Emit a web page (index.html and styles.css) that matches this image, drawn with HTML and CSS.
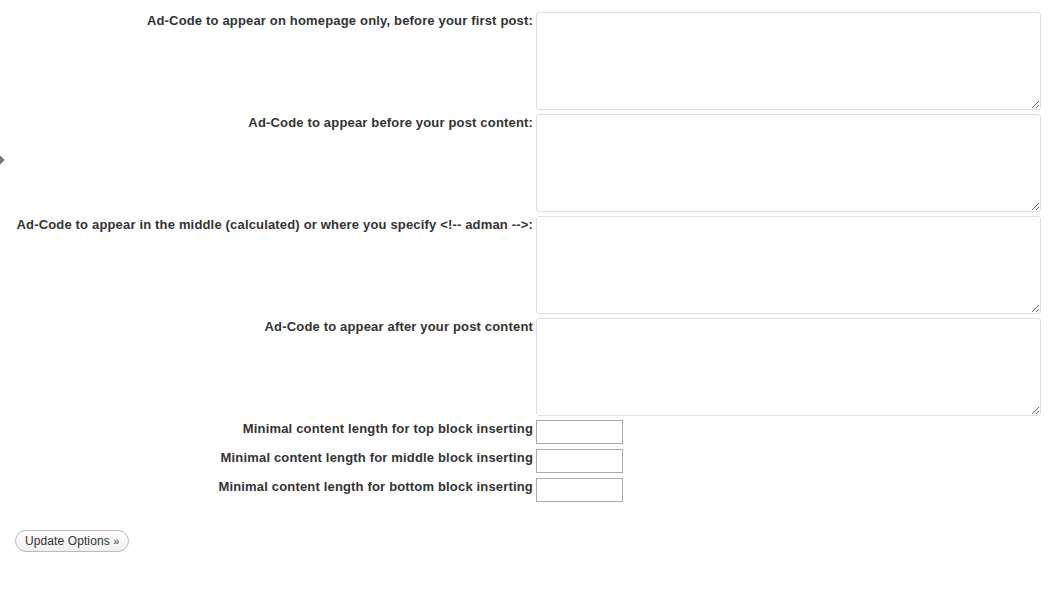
FILE: index.html
```html
<!DOCTYPE html>
<html>
<head>
	<meta charset="utf-8">
	<title>Adman Options</title>
<link rel="stylesheet" href="styles.css">
</head>
<body>
	<div class="menu-arrow"></div>

	<div class="wrap">
		<form class="options">
			<label for="top-code">Ad-Code to appear on homepage only, before your first post:</label>
			<textarea id="top-code"></textarea>

			<label for="before-code">Ad-Code to appear before your post content:</label>
			<textarea id="before-code"></textarea>

			<label for="middle-code">Ad-Code to appear in the middle (calculated) or where you specify &lt;!-- adman --&gt;:</label>
			<textarea id="middle-code"></textarea>

			<label for="after-code">Ad-Code to appear after your post content</label>
			<textarea id="after-code"></textarea>

			<label for="min-top">Minimal content length for top block inserting</label>
			<input type="text" id="min-top" class="small-field">

			<label for="min-middle">Minimal content length for middle block inserting</label>
			<input type="text" id="min-middle" class="small-field">

			<label for="min-bottom">Minimal content length for bottom block inserting</label>
			<input type="text" id="min-bottom" class="small-field">
		</form>

		<p class="submit">
			<button type="button" class="button">Update Options <span class="raquo">&raquo;</span></button>
		</p>
	</div>
</body>
</html>
```

FILE: styles.css
```css
* {
	margin: 0;
	padding: 0;
	box-sizing: border-box;
}

body {
	background-color: #fff;
	font-family: "Liberation Sans", Arial, sans-serif;
	color: #333;
}

.menu-arrow {
	position: absolute;
	top: 156px;
	left: -5px;
	width: 8px;
	height: 8px;
	background: #777;
	transform: rotate(45deg);
}

.wrap {
	padding: 12px 0 0 15px;
}

.options {
	display: grid;
	grid-template-columns: 518px 505px;
	column-gap: 3px;
	row-gap: 4px;
	align-items: start;
}

.options label {
	padding-top: 1px;
	text-align: right;
	font-size: 13px;
	font-weight: bold;
	line-height: 16px;
	letter-spacing: 0.17px;
	color: #333;
	white-space: nowrap;
}

.options textarea {
	width: 505px;
	height: 98px;
	border: 1px solid #dfdfdf;
	border-radius: 3px;
	background: #fff;
	font-family: "Liberation Mono", monospace;
	font-size: 12px;
}

.small-field {
	width: 87px;
	height: 24px;
	margin-bottom: 1px;
	border: 1px solid #aaa;
	background: #fff;
	font-family: "Liberation Sans", Arial, sans-serif;
	font-size: 12px;
}

.submit {
	margin-top: 27px;
}

.button {
	height: 22px;
	padding: 0 9px;
	border: 1px solid #bbb;
	border-radius: 11px;
	background: linear-gradient(#fff, #efefef);
	font-family: "Liberation Sans", Arial, sans-serif;
	font-size: 12px;
	letter-spacing: 0.1px;
	color: #333;
	line-height: 20px;
	cursor: pointer;
}

.raquo {
	font-size: 11px;
}
```
